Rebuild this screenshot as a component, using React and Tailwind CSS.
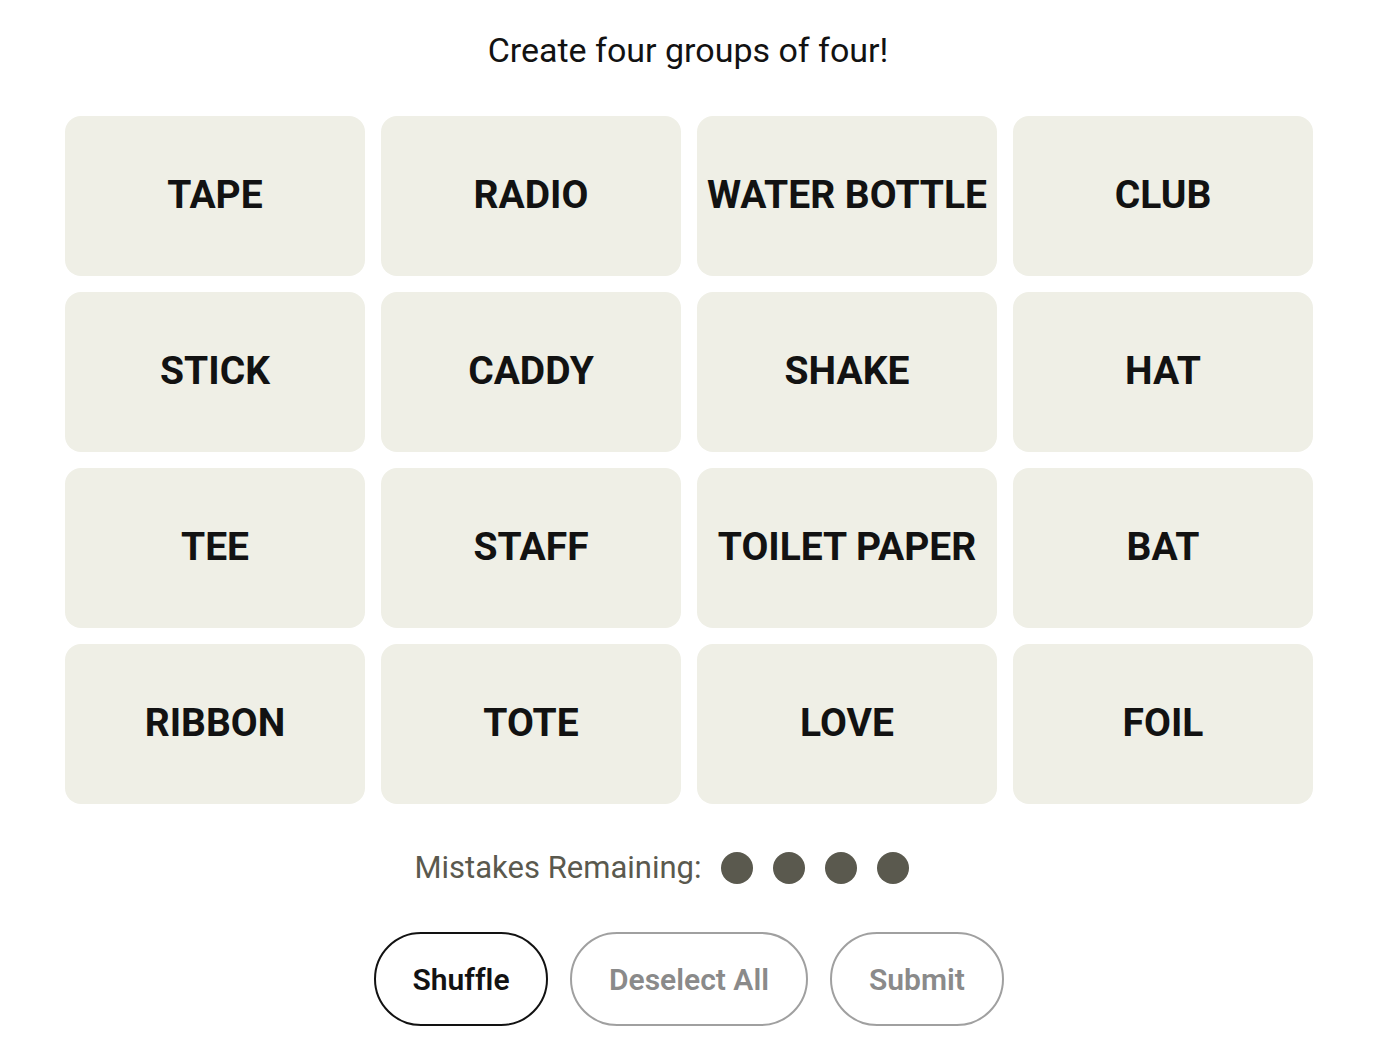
const words = [
  "TAPE", "RADIO", "WATER BOTTLE", "CLUB",
  "STICK", "CADDY", "SHAKE", "HAT",
  "TEE", "STAFF", "TOILET PAPER", "BAT",
  "RIBBON", "TOTE", "LOVE", "FOIL",
];

export default function App() {
  return (
    <div className="min-h-screen bg-white flex flex-col items-center text-[#121212]" style={{ fontFamily: "Roboto, 'Liberation Sans', sans-serif" }}>
      <h1 className="mt-[27px] h-[46px] text-[34px] leading-[46px] font-normal pl-[2px]">Create four groups of four!</h1>

      <div className="mt-[43px] ml-[4px] grid grid-cols-[repeat(4,300px)] gap-4">
        {words.map((w) => (
          <button
            key={w}
            className="h-[160px] rounded-[16px] bg-[#efefe6] flex items-center justify-center text-[39px] font-bold uppercase pb-[2px]"
          >
            {w}
          </button>
        ))}
      </div>

      <div className="mt-[47px] flex items-center h-[34px] -ml-[50px]">
        <span className="text-[31px] text-[#5a594e] mr-[20px]">Mistakes Remaining:</span>
        <div className="flex gap-5">
          <span className="w-8 h-8 rounded-full bg-[#5a594e]" />
          <span className="w-8 h-8 rounded-full bg-[#5a594e]" />
          <span className="w-8 h-8 rounded-full bg-[#5a594e]" />
          <span className="w-8 h-8 rounded-full bg-[#5a594e]" />
        </div>
      </div>

      <div className="mt-[47px] flex gap-[22px] ml-[4px]">
        <button className="w-[174px] h-[94px] rounded-full border-2 border-[#121212] text-[30px] font-semibold" style={{ fontVariantLigatures: "none" }}>Shuffle</button>
        <button className="w-[238px] h-[94px] rounded-full border-2 border-[#a0a0a0] text-[#8a8a8a] text-[30px] font-semibold">Deselect All</button>
        <button className="w-[174px] h-[94px] rounded-full border-2 border-[#a0a0a0] text-[#8a8a8a] text-[30px] font-semibold">Submit</button>
      </div>
    </div>
  );
}
